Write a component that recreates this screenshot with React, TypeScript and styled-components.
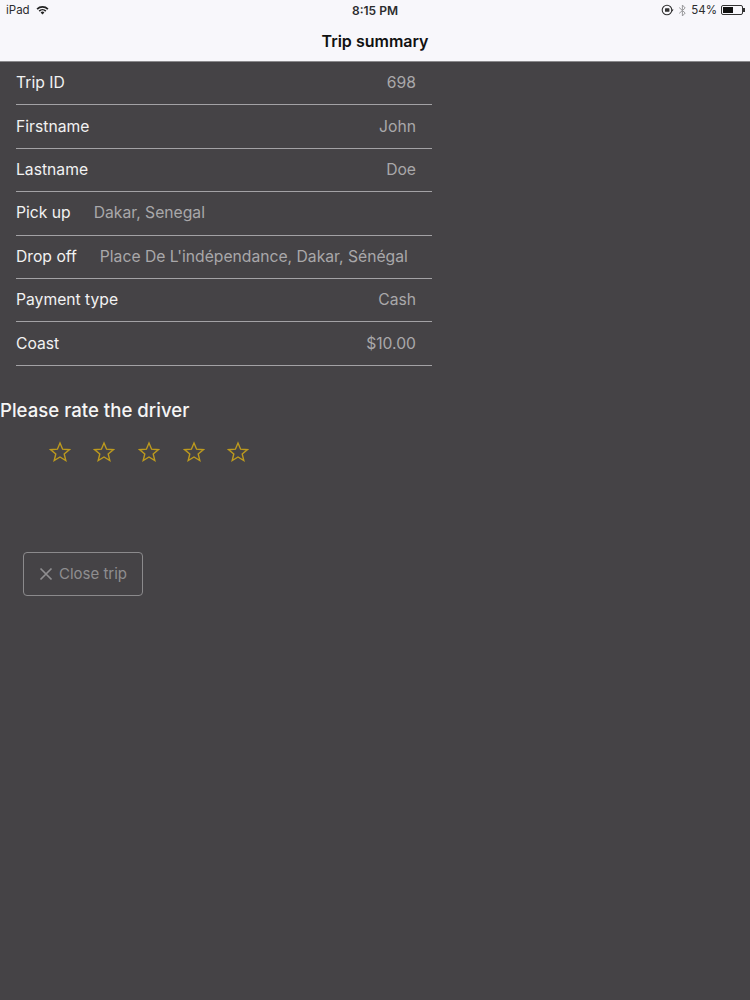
import { createGlobalStyle } from "styled-components";
import styled from "styled-components";

const Global = createGlobalStyle`
  html, body {
    margin: 0;
    padding: 0;
    background: #454346;
  }
  body {
    font-family: Inter, "Noto Sans", "Liberation Sans", sans-serif;
  }
`;

const Page = styled.div`
  width: 750px;
  height: 1000px;
  background: #454346;
  overflow: hidden;
`;

const Header = styled.header`
  height: 61px;
  background: #f8f7fb;
  border-bottom: 1px solid #8a898c;
  display: flex;
  flex-direction: column;
`;

const StatusBar = styled.div`
  height: 20px;
  display: grid;
  grid-template-columns: 1fr auto 1fr;
  align-items: center;
  padding: 0 6px;
  font-size: 11.5px;
  color: #2c2c2e;
`;

const StatusLeft = styled.div`
  display: flex;
  align-items: center;
  gap: 6px;
`;

const StatusRight = styled.div`
  display: flex;
  align-items: center;
  justify-content: flex-end;
  gap: 4px;
`;

const Clock = styled.div`
  font-weight: 600;
  font-size: 12px;
`;

const Battery = styled.div`
  width: 22px;
  height: 10px;
  border: 1px solid #333;
  border-radius: 2px;
  padding: 1px;
  box-sizing: border-box;
  margin-right: 1px;
  position: relative;
  &::before {
    content: "";
    display: block;
    width: 54%;
    height: 100%;
    background: #111;
  }
  &::after {
    content: "";
    position: absolute;
    right: -3px;
    top: 2px;
    width: 2px;
    height: 4px;
    background: #333;
  }
`;

const NavTitle = styled.div`
  flex: 1;
  display: flex;
  align-items: center;
  justify-content: center;
  font-size: 16px;
  font-weight: 600;
  color: #111;
`;

const List = styled.div`
  width: 416px;
  margin-left: 16px;
`;

const Row = styled.div`
  height: 43.4px;
  box-sizing: border-box;
  border-bottom: 1px solid #a3a2a5;
  display: flex;
  align-items: center;
  gap: 23px;
  padding-right: 16px;
  padding-bottom: 1px;
  font-size: 15.7px;
`;

const Label = styled.span`
  color: #f2f2f2;
  white-space: nowrap;
`;

const Value = styled.span<{ $left?: boolean }>`
  color: #a9a8aa;
  white-space: nowrap;
  ${(p) => (p.$left ? "" : "margin-left: auto;")}
`;

const RateTitle = styled.h2`
  margin: 32px 0 0;
  font-size: 18.6px;
  line-height: 24px;
  font-weight: 500;
  color: #f5f5f5;
`;

const Stars = styled.div`
  display: flex;
  gap: 22.7px;
  margin: 19.5px 0 0 48.5px;
`;

const CloseButton = styled.button`
  margin: 88.5px 0 0 23px;
  width: 120px;
  height: 44px;
  box-sizing: border-box;
  background: transparent;
  border: 1px solid #8b8a8c;
  border-radius: 4px;
  display: flex;
  align-items: center;
  justify-content: center;
  gap: 6px;
  padding: 0;
  color: #8f8e90;
  font-family: inherit;
  font-size: 15px;
`;

const rows = [
  { label: "Trip ID", value: "698" },
  { label: "Firstname", value: "John" },
  { label: "Lastname", value: "Doe" },
  { label: "Pick up", value: "Dakar, Senegal", left: true },
  { label: "Drop off", value: "Place De L'indépendance, Dakar, Sénégal", left: true },
  { label: "Payment type", value: "Cash" },
  { label: "Coast", value: "$10.00" },
];

function Star() {
  return (
    <svg width="22" height="22" viewBox="0 0 22 22">
      <path
        d="M11 2l2.6 6.2 6.7.5-5.1 4.3 1.6 6.5L11 16l-5.8 3.5L6.8 13 1.7 8.7l6.7-.5z"
        fill="none"
        stroke="#bd9a1e"
        strokeWidth="1.4"
        strokeLinejoin="miter"
      />
    </svg>
  );
}

function Wifi() {
  return (
    <svg width="13" height="10" viewBox="0 0 13 10">
      <path d="M.5 3.4a8.5 8.5 0 0 1 12 0L11.3 4.7a6.8 6.8 0 0 0-9.6 0z" fill="#222" />
      <path d="M2.6 5.5a5.5 5.5 0 0 1 7.8 0L9.2 6.7a3.8 3.8 0 0 0-5.4 0z" fill="#222" />
      <path d="M4.6 7.5a2.7 2.7 0 0 1 3.8 0L6.5 9.5z" fill="#222" />
    </svg>
  );
}

function RotationLock() {
  return (
    <svg width="13" height="12" viewBox="0 0 13 12">
      <circle cx="6" cy="6" r="4.8" fill="none" stroke="#333" strokeWidth="1.1" />
      <rect x="4" y="4.2" width="4.4" height="3.6" rx="0.6" fill="#333" />
      <path d="M10 5.5h2.6L11.3 7.4z" fill="#333" />
    </svg>
  );
}

function Bluetooth() {
  return (
    <svg width="9" height="13" viewBox="0 0 9 13">
      <path
        d="M1.2 3.6l6 5.4-2.8 3V1l2.8 3-6 5.4"
        fill="none"
        stroke="#9a9a9c"
        strokeWidth="1"
      />
    </svg>
  );
}

function CloseIcon() {
  return (
    <svg width="14" height="14" viewBox="0 0 14 14">
      <path d="M1.5 1.5l11 11M12.5 1.5l-11 11" stroke="#8f8e90" strokeWidth="1.7" fill="none" />
    </svg>
  );
}

export default function App() {
  return (
    <Page>
      <Global />
      <Header>
        <StatusBar>
          <StatusLeft>
            iPad
            <Wifi />
          </StatusLeft>
          <Clock>8:15 PM</Clock>
          <StatusRight>
            <RotationLock />
            <Bluetooth />
            <span>54%</span>
            <Battery />
          </StatusRight>
        </StatusBar>
        <NavTitle>Trip summary</NavTitle>
      </Header>
      <List>
        {rows.map((r) => (
          <Row key={r.label}>
            <Label>{r.label}</Label>
            <Value $left={r.left}>{r.value}</Value>
          </Row>
        ))}
      </List>
      <RateTitle>Please rate the driver</RateTitle>
      <Stars>
        {[0, 1, 2, 3, 4].map((i) => (
          <Star key={i} />
        ))}
      </Stars>
      <CloseButton>
        <CloseIcon />
        Close trip
      </CloseButton>
    </Page>
  );
}
